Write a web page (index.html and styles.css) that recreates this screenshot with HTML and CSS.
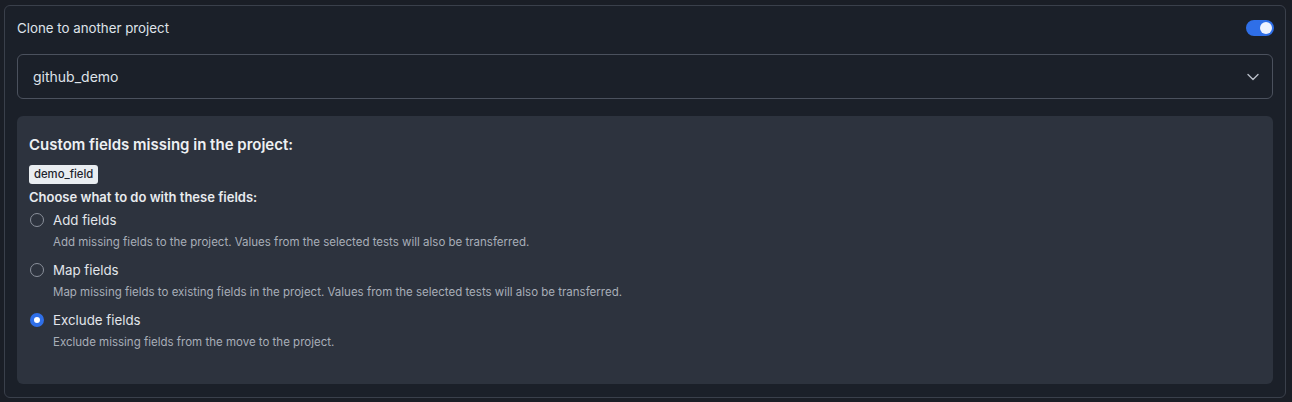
FILE: index.html
```html
<!DOCTYPE html>
<html>
<head>
<meta charset="utf-8">
<link rel="stylesheet" href="styles.css">
</head>
<body>
<div class="card">
  <div class="header">
    <span class="title">Clone to another project</span>
    <span class="toggle"><span class="knob"></span></span>
  </div>
  <div class="select">
    <span>github_demo</span>
    <svg class="chev" width="12" height="8" viewBox="0 0 12 8"><path d="M1 1.5 L6 6.5 L11 1.5" fill="none" stroke="#b8bec8" stroke-width="1.4" stroke-linecap="round" stroke-linejoin="round"/></svg>
  </div>
  <div class="panel">
    <div class="heading">Custom fields missing in the project:</div>
    <div class="badges"><span class="badge">demo_field</span></div>
    <div class="choose">Choose what to do with these fields:</div>
    <div class="options">
      <div class="option">
        <div class="row"><span class="radio"></span><span class="label">Add fields</span></div>
        <div class="desc">Add missing fields to the project. Values from the selected tests will also be transferred.</div>
      </div>
      <div class="option">
        <div class="row"><span class="radio"></span><span class="label">Map fields</span></div>
        <div class="desc">Map missing fields to existing fields in the project. Values from the selected tests will also be transferred.</div>
      </div>
      <div class="option">
        <div class="row"><span class="radio checked"></span><span class="label">Exclude fields</span></div>
        <div class="desc">Exclude missing fields from the move to the project.</div>
      </div>
    </div>
  </div>
</div>
</body>
</html>
```

FILE: styles.css
```css
html, body {
  margin: 0;
  padding: 0;
  background: #1a1e26;
  font-family: Inter, "Noto Sans", sans-serif;
  color: #e4e7ec;
}
body {
  padding: 5px 6px 5px 4px;
}
.card {
  border: 1px solid #3a404b;
  border-radius: 6px;
  background: #1b2029;
  padding: 12px 12px 13px 12px;
}
.header {
  display: flex;
  align-items: center;
  justify-content: space-between;
  height: 20px;
}
.title {
  font-size: 13.3px;
  color: #dfe3e9;
}
.toggle {
  width: 28px;
  height: 16px;
  border-radius: 8px;
  background: #2f6fe8;
  display: flex;
  align-items: center;
  justify-content: flex-end;
  padding-right: 2px;
  box-sizing: border-box;
  margin-right: -1px;
}
.knob {
  width: 12px;
  height: 12px;
  border-radius: 50%;
  background: #eef3ff;
}
.select {
  margin-top: 16px;
  height: 45px;
  box-sizing: border-box;
  border: 1px solid #4b515d;
  border-radius: 6px;
  display: flex;
  align-items: center;
  justify-content: space-between;
  padding: 0 13px 0 15px;
  font-size: 14px;
  color: #dfe3e9;
}
.chev { display: block; }
.panel {
  margin-top: 17px;
  background: #2d333e;
  border-radius: 6px;
  padding: 19px 12px 34px 12px;
}
.heading {
  font-size: 15px;
  font-weight: 600;
  line-height: 20px;
  color: #eef0f3;
}
.badges {
  margin-top: 10px;
  display: flex;
}
.badge {
  background: #e9edf1;
  color: #1d232c;
  font-size: 11.3px;
  font-weight: 500;
  line-height: 19px;
  height: 19px;
  padding: 0 5px;
  border-radius: 3px;
}
.choose {
  margin-top: 4px;
  font-size: 13px;
  font-weight: 600;
  line-height: 18px;
  color: #e8ebef;
}
.options {
  margin-top: 4px;
  display: flex;
  flex-direction: column;
  gap: 10px;
}
.row {
  display: flex;
  align-items: center;
  height: 20px;
}
.radio {
  width: 14px;
  height: 14px;
  box-sizing: border-box;
  border: 1px solid #8a909b;
  border-radius: 50%;
  margin-left: 1px;
  margin-right: 9px;
}
.radio.checked {
  border: 4px solid #2f6fe8;
  background: #ffffff;
}
.label {
  font-size: 13.3px;
  color: #e2e5ea;
}
.desc {
  margin-top: 4px;
  margin-left: 24px;
  font-size: 11.5px;
  line-height: 16px;
  color: #a8aeb8;
}
```
